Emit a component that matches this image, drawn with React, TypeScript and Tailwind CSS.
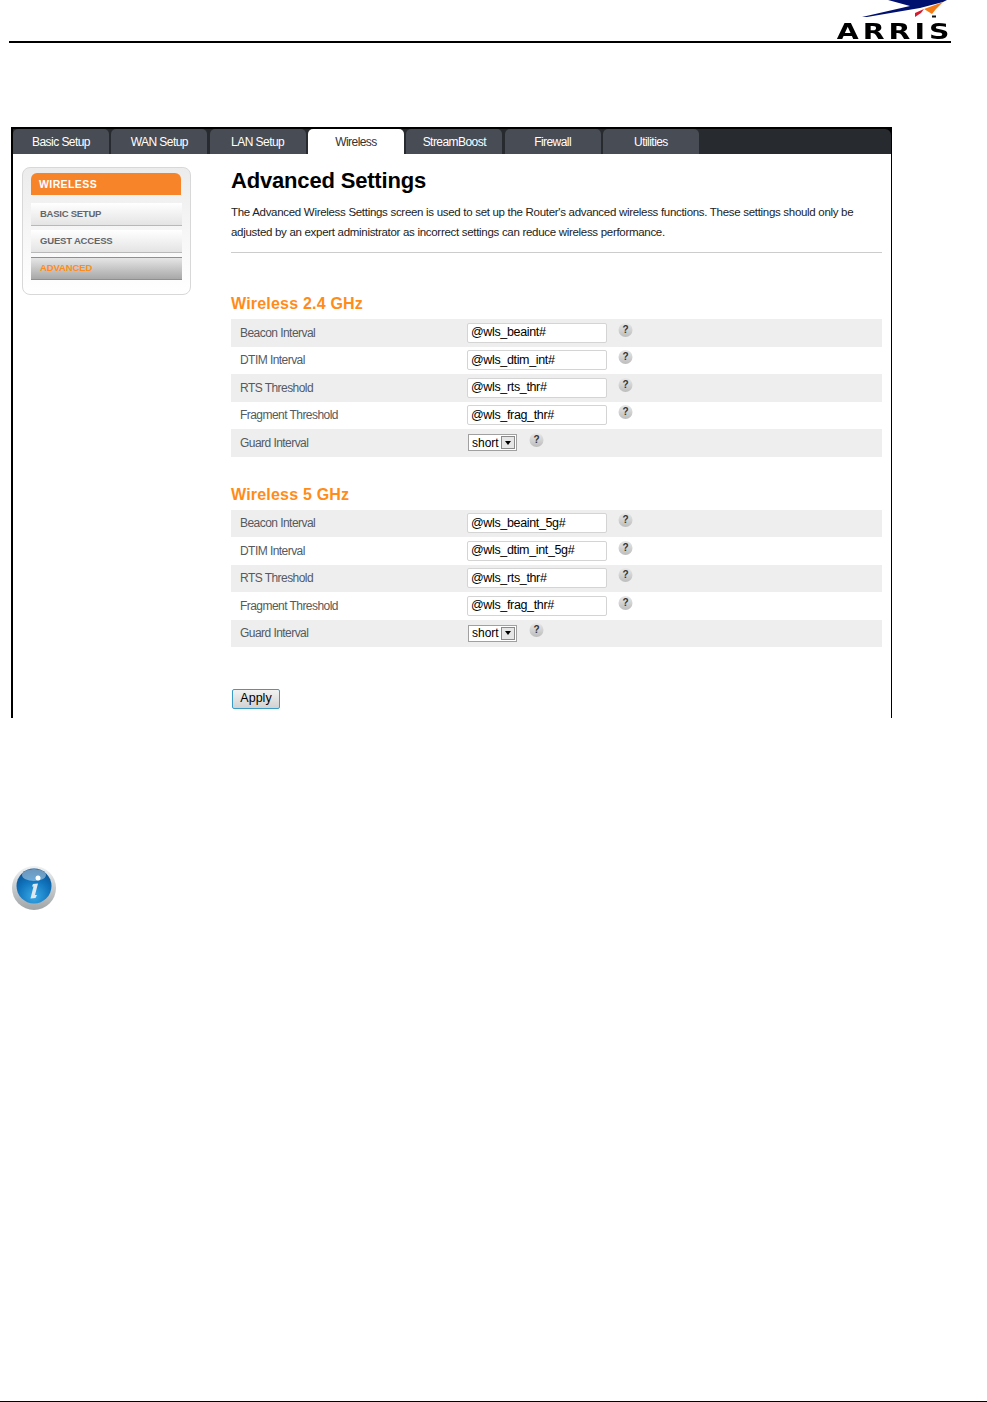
const tabs = ["Basic Setup", "WAN Setup", "LAN Setup", "Wireless", "StreamBoost", "Firewall", "Utilities"]

const section1 = [
    { label: "Beacon Interval", value: "@wls_beaint#" },
    { label: "DTIM Interval", value: "@wls_dtim_int#" },
    { label: "RTS Threshold", value: "@wls_rts_thr#" },
    { label: "Fragment Threshold", value: "@wls_frag_thr#" },
]

const section2 = [
    { label: "Beacon Interval", value: "@wls_beaint_5g#" },
    { label: "DTIM Interval", value: "@wls_dtim_int_5g#" },
    { label: "RTS Threshold", value: "@wls_rts_thr#" },
    { label: "Fragment Threshold", value: "@wls_frag_thr#" },
]

const Help = () => (
    <span className="flex h-[14px] w-[14px] -translate-y-[3px] translate-x-[0.5px] items-center justify-center rounded-full bg-gradient-to-b from-[#e8e8e8] to-[#bdbdbd] text-[10px] font-bold leading-none text-[#333]">?</span>
)

const Row = ({ label, shaded, children }: { label: string; shaded: boolean; children: React.ReactNode }) => (
    <div className={`flex h-[27.5px] items-center pl-[9px] ${shaded ? "bg-[#eeeeee]" : "bg-white"}`}>
        <span className="-translate-y-[0.5px] w-[227px] shrink-0 text-[12px] tracking-[-0.55px] text-[#555a60]">{label}</span>
        {children}
    </div>
)

const Section = ({ title, rows, className }: { title: string; rows: { label: string; value: string }[]; className: string }) => (
    <div className={className}>
        <h3 className="h-[24px] text-[16px] font-bold leading-[18px] tracking-[0.2px] text-[#ff8c1a]">{title}</h3>
        {rows.map((row, i) => (
            <Row key={row.label} label={row.label} shaded={i % 2 === 0}>
                <div className="flex h-[20px] w-[140px] items-center rounded-[2px] border border-[#d4d4d4] bg-white pl-[3px] text-[12.5px] tracking-[-0.35px] text-black">{row.value}</div>
                <div className="ml-[11px]"><Help /></div>
            </Row>
        ))}
        <Row label="Guard Interval" shaded>
            <div className="ml-[1px] flex h-[17px] w-[49px] items-center justify-between border border-[#a0a0a0] bg-white pl-[3px] pr-[1px] text-[12px] text-black">
                short
                <span className="flex h-[13px] w-[14px] items-center justify-center border border-[#8a8a8a] bg-[#e6e6e6]">
                    <span className="h-0 w-0 border-x-[3.5px] border-t-[4px] border-x-transparent border-t-black" />
                </span>
            </div>
            <div className="ml-[12px]"><Help /></div>
        </Row>
    </div>
)

const Logo = () => (
    <div className="flex flex-col items-end">
        <svg viewBox="826 0 125 24" className="h-[24px] w-[125px]">
            <path d="M862 17 L910 6 L888 0 L947 0 L943 2 L920 8 L867 17 Z" fill="#00106e" />
            <path d="M943 2 L924 9 L932 14 L936 9 Z" fill="#f47a16" />
            <path d="M915 17 L915 13 L924 9 L921 13 Z" fill="#d8192c" />
            <rect x="932" y="15.5" width="4" height="2" fill="#111" />
        </svg>
        <span className="mr-[-3px] origin-right scale-x-[1.35] text-[21px] font-bold leading-[17px] tracking-[3px] text-black [font-family:'DejaVu_Sans',sans-serif]">ARRIS</span>
    </div>
)

const InfoIcon = () => (
    <svg viewBox="0 0 46 46" className="ml-[11px] mt-[147px] h-[46px] w-[46px] blur-[0.5px]">
        <defs>
            <linearGradient id="rim" x1="0" y1="0" x2="0" y2="1">
                <stop offset="0" stopColor="#f0f2f3" />
                <stop offset="1" stopColor="#9fa4a6" />
            </linearGradient>
            <radialGradient id="ball" cx="0.5" cy="0.8" r="0.8">
                <stop offset="0" stopColor="#38a8e6" />
                <stop offset="0.6" stopColor="#0f72bb" />
                <stop offset="1" stopColor="#0b4f8c" />
            </radialGradient>
        </defs>
        <circle cx="23" cy="23" r="22" fill="url(#rim)" />
        <circle cx="23" cy="21" r="17.5" fill="url(#ball)" />
        <ellipse cx="23" cy="10" rx="12" ry="6" fill="#fff" opacity="0.4" />
        <circle cx="27" cy="13" r="2.5" fill="#fff" />
        <path d="M22 19 L27 18.5 L24 30 L26 30 L24.5 33 L19.5 33.5 L22.5 21.5 L21 21.5 Z" fill="#dfe8ee" />
    </svg>
)

const App = () => {
    return (
        <div className="relative h-[1402px] w-[987px] border-b border-black bg-white [font-family:'Liberation_Sans',Arial,sans-serif]">
            <header className="ml-[9px] flex h-[43px] w-[942px] justify-end border-b-2 border-black">
                <Logo />
            </header>

            <main className="ml-[11px] mt-[84px] h-[591px] w-[881px] border-l-2 border-r border-t-2 border-black">
                <div className="bg-black">
                    <nav className="flex h-[25px] gap-[2.33px] rounded-tr-[6px] bg-[#272a2e]">
                        {tabs.map((tab) => (
                            <div key={tab} className={`flex h-[25px] w-[96px] items-center justify-center rounded-t-[5px] text-[12px] tracking-[-0.55px] ${tab === "Wireless" ? "bg-white text-[#333]" : "bg-[#484c54] text-white"}`}>{tab}</div>
                        ))}
                    </nav>
                </div>

                <div className="flex">
                    <aside className="ml-[9px] mt-[13px] h-[128px] w-[169px] shrink-0 rounded-[8px] border border-[#d8d8d8] bg-gradient-to-b from-[#ececec] via-[#f6f6f6] to-white px-[8px] pt-[5px]">
                        <div className="flex h-[22px] w-[150px] items-center rounded-t-[6px] bg-[#f8842a] pl-[8px] pt-[1px] text-[10.5px] font-bold tracking-[0.4px] text-white">WIRELESS</div>
                        <div className="mt-[8px] flex h-[23px] w-[151px] items-center border-b border-[#b8b8b8] bg-gradient-to-b from-white to-[#e4e4e4] pl-[9px] pt-[1px] text-[9.5px] font-bold tracking-[-0.25px] text-[#62666c]">BASIC SETUP</div>
                        <div className="mt-[4px] flex h-[23px] w-[151px] items-center border-b border-[#b8b8b8] bg-gradient-to-b from-white to-[#e4e4e4] pl-[9px] pt-[1px] text-[9.5px] font-bold tracking-[-0.18px] text-[#62666c]">GUEST ACCESS</div>
                        <div className="mt-[4px] flex h-[23px] w-[151px] items-center border-y border-[#8f8f8f] bg-gradient-to-b from-[#e6e6e6] to-[#a8a8a8] pl-[9px] text-[9.5px] font-bold tracking-[-0.1px] text-[#ff8c1a]">ADVANCED</div>
                    </aside>

                    <div className="ml-[40px] w-[651px]">
                        <h1 className="mt-[14px] text-[22px] font-bold leading-[26px] tracking-[-0.18px] text-black">Advanced Settings</h1>
                        <p className="mt-[8px] border-b border-[#cccccc] pb-[10px] text-[11.5px] leading-[20px] tracking-[-0.3px] text-[#222]">
                            The Advanced Wireless Settings screen is used to set up the Router's advanced wireless functions. These settings should only be<br />
                            adjusted by an expert administrator as incorrect settings can reduce wireless performance.
                        </p>
                        <Section className="mt-[42px]" title="Wireless 2.4 GHz" rows={section1} />
                        <Section className="mt-[29px]" title="Wireless 5 GHz" rows={section2} />
                        <button className="ml-[1px] mt-[42px] flex h-[20px] w-[48px] items-center justify-center rounded-[2px] border border-[#3a9cc4] bg-gradient-to-b from-[#f2f2f2] to-[#d2d2d2] pb-[1px] text-[12.5px] text-black">Apply</button>
                    </div>
                </div>
            </main>

            <InfoIcon />
        </div>
    )
}
export default App
